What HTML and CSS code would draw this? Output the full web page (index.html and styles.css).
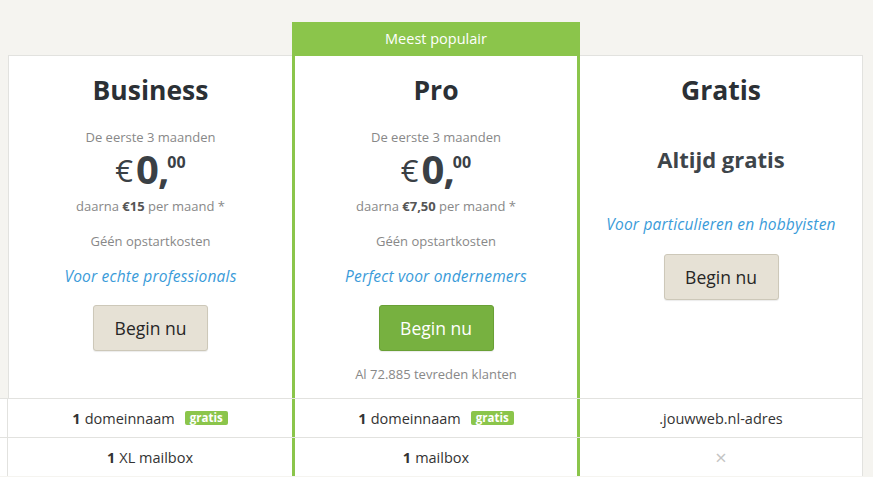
FILE: index.html
```html
<!DOCTYPE html>
<html lang="nl">
<head>
<meta charset="utf-8">
<title>Prijzen</title>
<link rel="stylesheet" href="styles.css">
</head>
<body>
<div class="pricing">
  <div class="plans">
    <div class="spacer"></div>
    <div class="plan plan-business">
      <h2 class="plan-title">Business</h2>
      <p class="intro">De eerste 3 maanden</p>
      <div class="price"><span class="cur">€</span><span class="whole">0,</span><span class="cents">00</span></div>
      <p class="after">daarna <b>€15</b> per maand *</p>
      <p class="setup">Géén opstartkosten</p>
      <p class="tagline">Voor echte professionals</p>
      <a class="btn">Begin nu</a>
    </div>
    <div class="plan-pro">
      <div class="pro-head">Meest populair</div>
      <div class="plan pro-body">
        <h2 class="plan-title">Pro</h2>
        <p class="intro">De eerste 3 maanden</p>
        <div class="price"><span class="cur">€</span><span class="whole">0,</span><span class="cents">00</span></div>
        <p class="after">daarna <b>€7,50</b> per maand *</p>
        <p class="setup">Géén opstartkosten</p>
        <p class="tagline">Perfect voor ondernemers</p>
        <a class="btn btn-green">Begin nu</a>
        <p class="customers">Al 72.885 tevreden klanten</p>
      </div>
    </div>
    <div class="plan plan-free">
      <h2 class="plan-title">Gratis</h2>
      <p class="always">Altijd gratis</p>
      <p class="tagline tagline-free">Voor particulieren en hobbyisten</p>
      <a class="btn btn-free">Begin nu</a>
    </div>
  </div>
  <div class="row">
    <div class="cell-label"></div>
    <div class="cell c-business"><b>1</b> domeinnaam <span class="badge">gratis</span></div>
    <div class="cell c-pro"><b>1</b> domeinnaam <span class="badge">gratis</span></div>
    <div class="cell c-free">.jouwweb.nl-adres</div>
  </div>
  <div class="row">
    <div class="cell-label"></div>
    <div class="cell c-business"><b>1</b> XL mailbox</div>
    <div class="cell c-pro"><b>1</b> mailbox</div>
    <div class="cell c-free"><span class="cross">×</span></div>
  </div>
</div>
</body>
</html>
```
FILE: styles.css
```css
* { box-sizing: border-box; }
html, body { margin: 0; padding: 0; }
body {
  background: #f5f4f0;
  font-family: "Open Sans", Lato, sans-serif;
  color: #333;
  overflow: hidden;
}
.pricing {
  width: 863px;
  padding-top: 22px;
}
.plans {
  display: flex;
  align-items: stretch;
}
.spacer { width: 8px; }
.plan {
  display: flex;
  flex-direction: column;
  align-items: center;
  background: #fff;
  text-align: center;
}
.plan p { margin: 0; }
.plan-business {
  width: 284px;
  margin-top: 33px;
  border-top: 1px solid #e2e2df;
  border-left: 1px solid #e2e2df;
}
.plan-free {
  width: 283px;
  margin-top: 33px;
  border-top: 1px solid #e2e2df;
  border-right: 1px solid #e2e2df;
}
.plan-pro {
  width: 288px;
  display: flex;
  flex-direction: column;
}
.pro-head {
  height: 34px;
  background: #8bc54b;
  color: #fff;
  font-size: 14.5px;
  line-height: 34px;
  text-align: center;
}
.pro-body {
  flex: 1;
  border-left: 3px solid #8bc54b;
  border-right: 3px solid #8bc54b;
  padding-bottom: 15px;
}
.plan-title {
  margin: 17px 0 0;
  font-size: 26.5px;
  line-height: 34px;
  font-weight: 700;
  color: #2b3035;
}
.intro {
  margin-top: 21px !important;
  font-size: 13px;
  line-height: 18px;
  color: #888;
}
.price {
  margin-top: 3px;
  height: 44px;
  line-height: 44px;
  color: #3a4045;
  display: flex;
  align-items: flex-start;
}
.cur {
  font-size: 31px;
  font-weight: 400;
  margin-right: 3px;
  margin-top: -1px;
}
.whole {
  font-size: 40px;
  font-weight: 700;
  letter-spacing: -1px;
  margin-top: -2px;
}
.cents {
  font-size: 16px;
  font-weight: 700;
  line-height: 20px;
  margin-top: 3px;
  margin-left: -1px;
}
.after {
  margin-top: 4px !important;
  font-size: 13px;
  line-height: 18px;
  color: #888;
}
.after b { color: #555; }
.setup {
  margin-top: 17px !important;
  font-size: 13px;
  line-height: 18px;
  color: #888;
}
.tagline {
  margin-top: 16px !important;
  font-size: 15.5px;
  line-height: 20px;
  font-style: italic;
  letter-spacing: 0.2px;
  color: #3a9bd9;
}
.btn {
  margin-top: 19px;
  width: 115px;
  height: 46px;
  display: flex;
  align-items: center;
  justify-content: center;
  background: #e6e1d5;
  border: 1px solid #cdc8b9;
  border-radius: 3px;
  font-size: 17.5px;
  color: #262626;
  box-shadow: 0 1px 1px rgba(0,0,0,0.08);
}
.btn-green {
  background: #77b140;
  border-color: #69a035;
  color: #fff;
}
.customers {
  margin-top: 14px !important;
  font-size: 13px;
  line-height: 18px;
  color: #888;
}
.always {
  margin-top: 37px !important;
  font-size: 22px;
  line-height: 30px;
  font-weight: 700;
  color: #3e454a;
}
.tagline-free { margin-top: 40px !important; }
.btn-free { margin-top: 20px; }

.row {
  display: flex;
  height: 39px;
  background: #fff;
  border-top: 1px solid #e2e2df;
  font-size: 14.5px;
  color: #333;
}
.cell-label {
  width: 8px;
  border-right: 1px solid #e2e2df;
}
.cell {
  display: flex;
  align-items: center;
  justify-content: center;
  gap: 4px;
}
.cell b { font-weight: 700; }
.c-business { width: 284px; }
.c-pro {
  width: 288px;
  border-left: 3px solid #8bc54b;
  border-right: 3px solid #8bc54b;
}
.c-free {
  width: 283px;
  border-right: 1px solid #e2e2df;
}
.badge {
  margin-left: 6px;
  background: #8bc54b;
  color: #fff;
  font-size: 11.5px;
  font-weight: 700;
  line-height: 14px;
  padding: 0 5px;
  border-radius: 2px;
}
.cross {
  color: #c4c4c4;
  font-size: 20px;
}
```
